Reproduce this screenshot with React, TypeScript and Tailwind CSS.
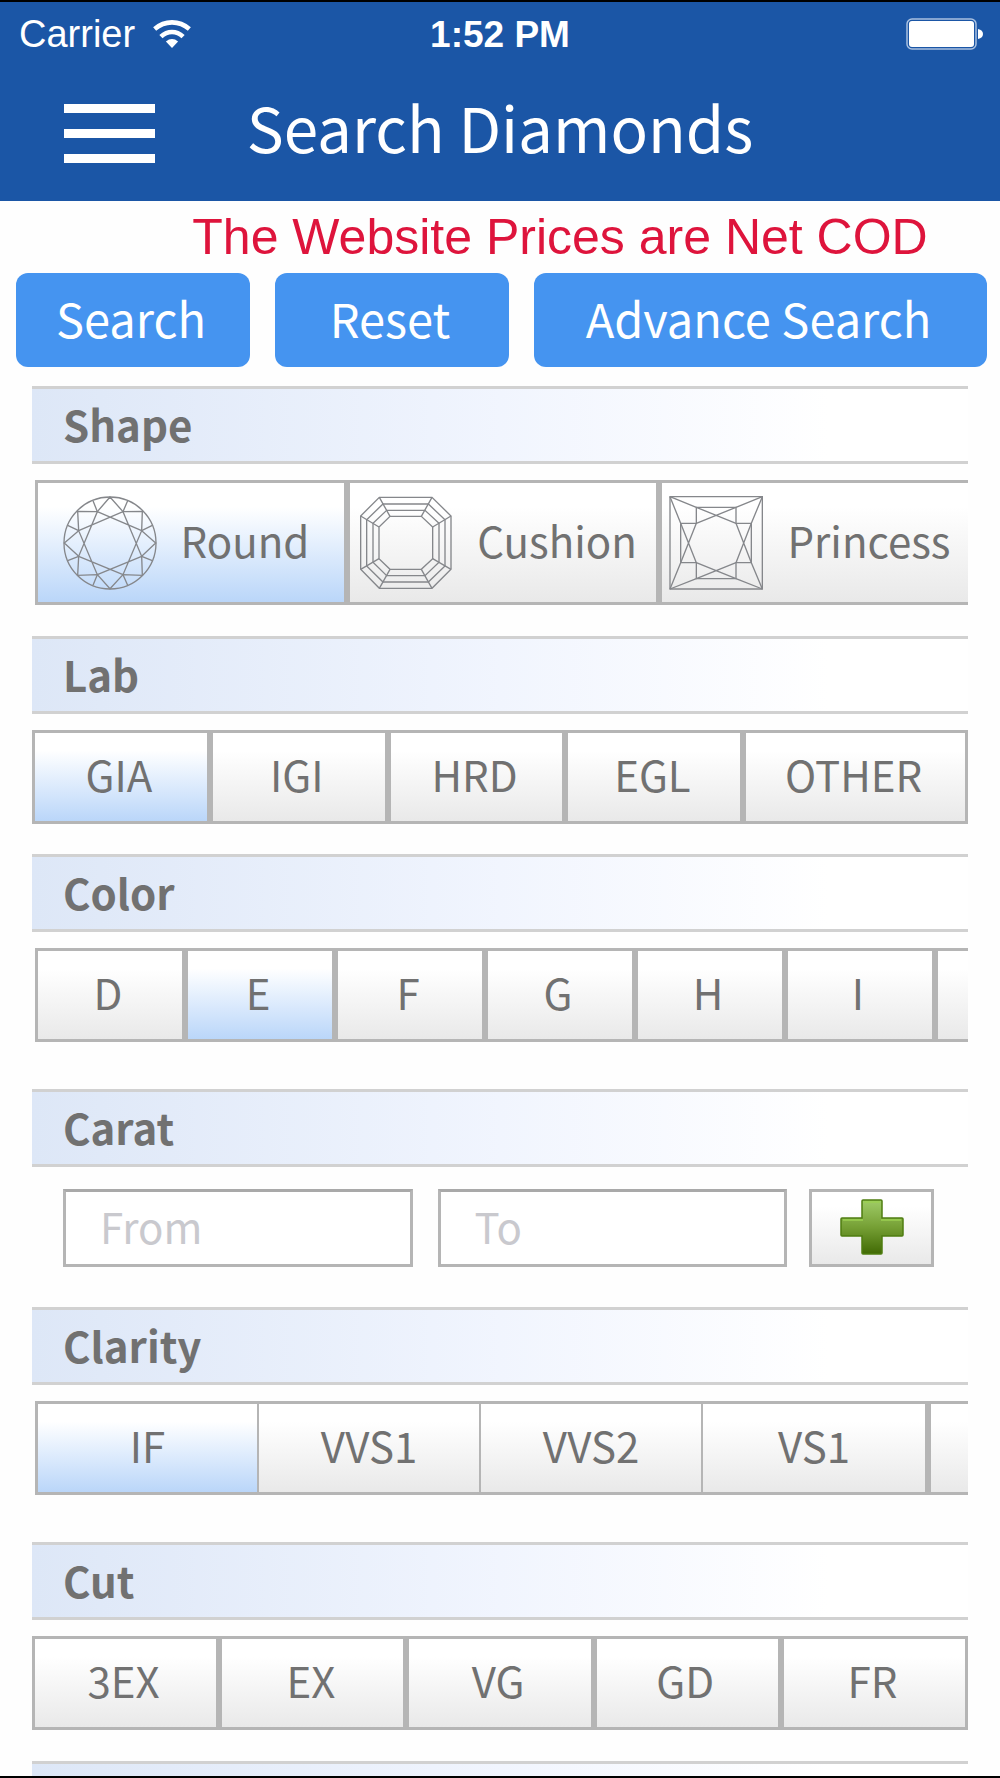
import React, { useState } from 'react';
import clsx from 'clsx';

interface Option {
  id: string;
  label?: string;
  icon?: React.ReactNode;
  className?: string;
}

const RoundIcon = () => (
  <svg viewBox="126 106 282 282" className="w-[94px] h-[94px] shrink-0" fill="none" stroke="#85878b" strokeWidth="4" aria-hidden="true">
    <circle cx="267" cy="247" r="138" />
    <path d="M229 153L362 210L306 342L173 287Z M306 153L362 287L229 342L173 210Z" />
    <path d="M267 109L229 153L170 152L173 210L130 247L173 287L170 344L229 342L267 384L306 342L364 344L362 287L404 247L362 210L364 152L306 153Z" />
    <path d="M216 120L229 153M320 120L306 153M394 194L362 210M394 300L362 287M320 374L306 342M216 374L229 342M140 300L173 287M140 194L173 210" />
  </svg>
);

const CushionIcon = () => (
  <svg viewBox="62 106 282 282" className="w-[94px] h-[94px] shrink-0" fill="none" stroke="#85878b" strokeWidth="4" aria-hidden="true">
    <path d="M123 110H281L338 166V326L281 383H123L67 326V166Z" />
    <path d="M134 130H270L320 177V316L270 364H134L85 316V177Z" />
    <path d="M145 149H260L302 188V305L260 345H145L104 305V188Z" />
    <path d="M155 167H249L283 199V294L249 326H155L122 294V199Z" />
    <path d="M123 110L155 167M281 110L249 167M338 166L283 199M338 326L283 294M281 383L249 326M123 383L155 326M67 326L122 294M67 166L122 199" />
  </svg>
);

const PrincessIcon = () => (
  <svg viewBox="62 105 282 282" className="w-[94px] h-[94px] shrink-0" fill="none" stroke="#85878b" strokeWidth="4" aria-hidden="true">
    <path d="M65 107H342V384H65Z" />
    <path d="M144 187V139H263V187H309V305H263V353H144V305H97V187Z" />
    <path d="M65 107L144 139L263 187M342 107L263 139L144 187M65 384L144 353L263 305M342 384L263 353L144 305" />
    <path d="M65 107L97 187L144 305M65 384L97 305L144 187M342 107L309 187L263 305M342 384L309 305L263 187" />
  </svg>
);

const WifiIcon = () => (
  <svg viewBox="0 0 115 84" className="w-[38px] h-7" aria-hidden="true">
    <g fill="none" stroke="#fff" strokeWidth="14">
      <path d="M5 27Q28 7 57.500 7Q87 7 110 27" />
      <path d="M24 50Q39 36 57.500 36Q76 36 91 50" />
    </g>
    <path d="M39 65Q57.500 50 76 65L57.500 84Z" fill="#fff" />
  </svg>
);

const BatteryIcon = () => (
  <svg viewBox="0 0 78 32" className="w-[78px] h-8" aria-hidden="true">
    <rect x="1" y="1" width="69" height="30" rx="5" fill="none" stroke="#a9c0e0" strokeWidth="1.500" />
    <rect x="3" y="3" width="65" height="26" rx="3" fill="#fff" />
    <path d="M72 11Q77 12 77 16Q77 20 72 21Z" fill="#fff" />
  </svg>
);

const PlusIcon = () => (
  <svg viewBox="0 0 64 58" className="w-16 h-[58px]" aria-hidden="true">
    <defs>
      <linearGradient id="plus" x1="0" y1="0" x2="0" y2="1">
        <stop offset="0" stopColor="#a0cc68" />
        <stop offset="0.5" stopColor="#76a035" />
        <stop offset="1" stopColor="#416a04" />
      </linearGradient>
    </defs>
    <path
      d="M23 2H41Q42 2 42 3V20H62Q63 20 63 21V37Q63 38 62 38H42V55Q42 56 41 56H23Q22 56 22 55V38H2Q1 38 1 37V21Q1 20 2 20H22V3Q22 2 23 2Z"
      fill="url(#plus)"
      stroke="#4f7d10"
      strokeWidth="1.500"
    />
    <path d="M24 4H40M3 22H23M41 22H61" stroke="#9ad050" strokeWidth="1.500" />
  </svg>
);

const shapes: Option[] = [
  { id: 'round', label: 'Round', icon: <RoundIcon /> },
  { id: 'cushion', label: 'Cushion', icon: <CushionIcon /> },
  { id: 'princess', label: 'Princess', icon: <PrincessIcon /> },
];

const labs: Option[] = [
  { id: 'gia', label: 'GIA' },
  { id: 'igi', label: 'IGI' },
  { id: 'hrd', label: 'HRD' },
  { id: 'egl', label: 'EGL' },
  { id: 'other', label: 'OTHER', className: 'flex-1 border-[3px] pr-1' },
];

const colors: Option[] = [
  { id: 'd', label: 'D' },
  { id: 'e', label: 'E' },
  { id: 'f', label: 'F' },
  { id: 'g', label: 'G' },
  { id: 'h', label: 'H' },
  { id: 'i', label: 'I' },
  { id: 'next' },
];

const clarities: Option[] = [
  { id: 'if', label: 'IF', className: 'w-[223px] border-y-[3px] border-l-[3px] border-r' },
  { id: 'vvs1', label: 'VVS1', className: 'w-[222px] border-y-[3px] border-x' },
  { id: 'vvs2', label: 'VVS2', className: 'w-[222px] border-y-[3px] border-x' },
  { id: 'vs1', label: 'VS1', className: 'w-[226px] border-y-[3px] border-l border-r-[3px]' },
  { id: 'next', className: 'w-[226px] border-[3px]' },
];

const cuts: Option[] = [
  { id: '3ex', label: '3EX' },
  { id: 'ex', label: 'EX' },
  { id: 'vg', label: 'VG' },
  { id: 'gd', label: 'GD' },
  { id: 'fr', label: 'FR' },
];

const band =
  'h-[78px] border-y-[3px] border-[#d1d1d1] bg-linear-to-r from-[#dde7f7] via-[#f1f5fe] via-50% to-white to-85%';

interface SectionProps {
  title: string;
  className?: string;
  children: React.ReactNode;
}

const Section: React.FC<SectionProps> = ({ title, className, children }) => (
  <section className={className}>
    <h2 className={clsx(band, 'px-[31px] text-[42px] leading-[70px] font-bold')}>{title}</h2>
    {children}
  </section>
);

interface OptionRowProps {
  options: Option[];
  initial?: string;
  itemClass?: string;
  scroll?: boolean;
  tall?: boolean;
}

const OptionRow: React.FC<OptionRowProps> = ({ options, initial, itemClass, scroll, tall }) => {
  const [selected, setSelected] = useState(initial);

  return (
    <div
      className={clsx(
        'mt-4 flex',
        tall ? 'h-[125px]' : 'h-[94px]',
        scroll && 'pl-[3px] overflow-x-auto overflow-y-hidden [scrollbar-width:none]'
      )}
    >
      {options.map((option) => (
        <button
          key={option.id}
          type="button"
          aria-pressed={selected === option.id}
          onClick={() => setSelected(option.id)}
          className={clsx(
            'flex items-center justify-center shrink-0 border-[#b5b5b5] bg-linear-to-b from-white from-20% text-[42px] leading-none',
            option.className || itemClass,
            option.icon && 'gap-6',
            selected === option.id ? 'to-[#bad6f9]' : 'to-[#e9e9e9]'
          )}
        >
          {option.icon}
          <span className="pb-1.5">{option.label}</span>
        </button>
      ))}
    </div>
  );
};

const App: React.FC = () => {
  const [from, setFrom] = useState('');
  const [to, setTo] = useState('');

  const actionClass = 'h-[94px] pr-1 pb-1.5 rounded-xl bg-[#4594f0]';
  const inputClass =
    'min-w-0 flex-1 h-[78px] px-[34px] pb-1.5 bg-white border-[3px] border-[#b5b5b5] border-t-[#a9a9a9] text-[42px] leading-none placeholder:text-[#c9c9ce] outline-none';

  return (
    <div className="h-screen flex flex-col overflow-hidden border-y-2 border-black bg-[#fefefe] text-[#717171] font-['Noto_Sans_CJK_SC',sans-serif]">
      <header className="shrink-0 bg-[#1b56a6] text-white">
        {/* Status bar */}
        <div className="h-16 grid grid-cols-3 items-center px-4 font-['Liberation_Sans',sans-serif]">
          <div className="flex items-center gap-[18px] pl-[3px] text-[38px] leading-none">
            <span>Carrier</span>
            <WifiIcon />
          </div>
          <span className="text-center text-[37px] leading-none font-bold">1:52 PM</span>
          <div className="flex justify-end">
            <BatteryIcon />
          </div>
        </div>

        {/* Navigation */}
        <div className="h-[135px] grid grid-cols-[1fr_auto_1fr] items-center px-16">
          <button type="button" aria-label="Menu" className="w-[91px] flex flex-col gap-4">
            <span className="h-[9px] bg-white" />
            <span className="h-[9px] bg-white" />
            <span className="h-[9px] bg-white" />
          </button>
          <h1 className="pb-4 text-[62px] leading-none">Search Diamonds</h1>
        </div>
      </header>

      <main className="flex-1 min-h-0 overflow-hidden">
        <p className="py-1 pl-[120px] text-center text-[50px] leading-[64px] text-[#de143c] font-['Liberation_Sans',sans-serif]">
          The Website Prices are Net COD
        </p>

        <div className="flex gap-[25px] pl-4 pr-[13px] text-[47px] leading-none text-white">
          <button type="button" className={clsx(actionClass, 'w-[234px]')}>Search</button>
          <button type="button" className={clsx(actionClass, 'w-[234px]')}>Reset</button>
          <button type="button" className={clsx(actionClass, 'flex-1')}>Advance Search</button>
        </div>

        <div className="mt-[19px] mx-8">
          <Section title="Shape" className="pb-[31px]">
            <OptionRow options={shapes} initial="round" itemClass="w-[312px] border-[3px] pr-2.5" scroll tall />
          </Section>

          <Section title="Lab" className="pb-[30px]">
            <OptionRow options={labs} initial="gia" itemClass="w-[19%] border-[3px] pr-1" />
          </Section>

          <Section title="Color" className="pb-[47px]">
            <OptionRow options={colors} initial="e" itemClass="w-[150px] border-[3px] pr-1" scroll />
          </Section>

          <Section title="Carat" className="pb-10">
            <div className="mt-[22px] pl-[31px] pr-[34px] flex">
              <input aria-label="From" placeholder="From" value={from} onChange={(e) => setFrom(e.target.value)} className={inputClass} />
              <input aria-label="To" placeholder="To" value={to} onChange={(e) => setTo(e.target.value)} className={clsx(inputClass, 'ml-[25px]')} />
              <button
                type="button"
                aria-label="Add carat range"
                className="ml-[22px] w-[125px] h-[78px] flex items-start justify-center border-[3px] border-[#b5b5b5] bg-linear-to-b from-white from-20% to-[#e9e9e9] pt-1.5"
              >
                <PlusIcon />
              </button>
            </div>
          </Section>

          <Section title="Clarity" className="pb-[47px]">
            <OptionRow options={clarities} initial="if" scroll />
          </Section>

          <Section title="Cut" className="pb-[31px]">
            <OptionRow options={cuts} itemClass="flex-1 border-[3px] pr-1" />
          </Section>

          <div className={band} />
        </div>
      </main>
    </div>
  );
};

export default App;
